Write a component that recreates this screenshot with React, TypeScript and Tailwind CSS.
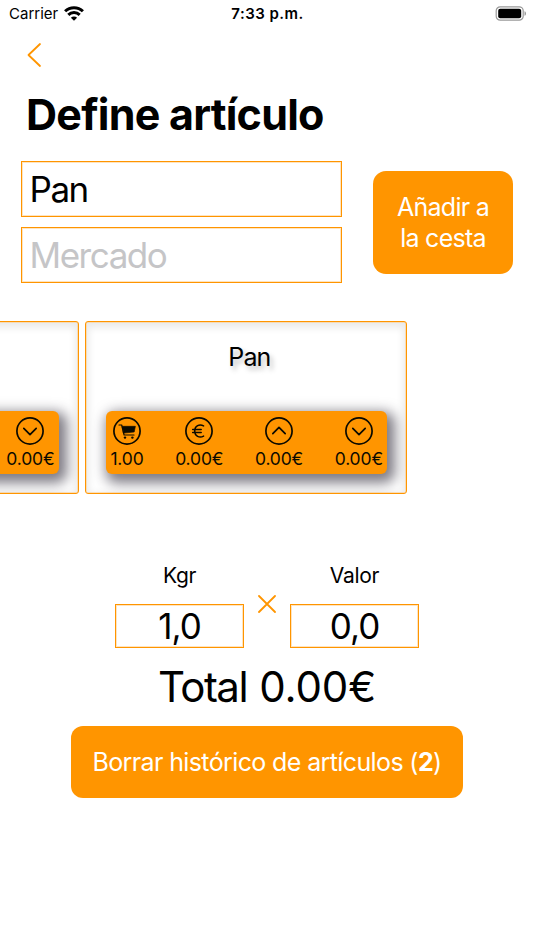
import React from "react";

type StatKind = "cart" | "euro" | "up" | "down";

function StatIcon({ kind }: { kind: StatKind }) {
  return (
    <svg className="block h-7 w-7" viewBox="0 0 28 28" fill="none" stroke="#0b0a00" strokeWidth="1.7" strokeLinecap="round" strokeLinejoin="round">
      <circle cx="14" cy="14" r="13.1" />
      {kind === "down" && <path d="M7.8 11.3 14 17.7l6.2-6.4" />}
      {kind === "up" && <path d="M7.8 16.7 14 10.3l6.2 6.4" />}
      {kind === "euro" && <path d="M18.6 8.9C14.5 6.700 9.700 8.600 9.700 14s4.800 7.300 8.900 5.100M7.700 12.500h8.500M7.700 15.400h8.500" strokeWidth="1.5" />}
      {kind === "cart" && (
        <g>
          <path d="M6 8h2.700l2.400 10h9.900" strokeWidth="1.200" />
          <path d="M9.400 9.300h13l-1.200 5.700-10.500 1.100z" fill="#0b0a00" strokeWidth="0.600" />
          <circle cx="12" cy="20.600" r="1.200" fill="#0b0a00" stroke="none" />
          <circle cx="19.400" cy="20.600" r="1.200" fill="#0b0a00" stroke="none" />
        </g>
      )}
    </svg>
  );
}

const stats: { kind: StatKind; value: string }[] = [
  { kind: "cart", value: "1.00" },
  { kind: "euro", value: "0.00€" },
  { kind: "up", value: "0.00€" },
  { kind: "down", value: "0.00€" },
];

function ArticleCard() {
  return (
    <div className="flex h-[173px] w-[322px] shrink-0 flex-col overflow-hidden rounded-[3px] border border-[#ff9500] px-[19.5px] shadow-[inset_0_0_0_0.5px_#ffca80,inset_0_3px_7px_3px_#ebebeb]">
      <div className="mt-[19px] h-8 pl-[6px] text-center text-[25px] leading-8 tracking-[-0.900px] [text-shadow:3px_4px_5px_rgba(0,0,0,0.25)]">Pan</div>
      <div className="mt-[38px] flex h-[63px] justify-between rounded-[6px] bg-[#ff9500] pl-[4.500px] pr-1 pt-[6px] shadow-[4px_5px_13px_4px_rgba(40,35,50,0.6)]">
        {stats.map((s) => (
          <div key={s.kind} className="flex flex-col items-center">
            <StatIcon kind={s.kind} />
            <span className="mt-[3px] text-[17.5px] leading-[22px] tracking-[-0.150px] text-[#0b0a00]">{s.value}</span>
          </div>
        ))}
      </div>
    </div>
  );
}

function Field({ label, value }: { label: string; value: string }) {
  return (
    <div className="flex w-[129px] flex-col">
      <span className="pt-px text-center text-[21px] leading-6 tracking-[-0.3px]">{label}</span>
      <div className="mt-4 h-[44px] border border-[#ff9500] text-center text-[35px] leading-[43px] tracking-[-1px] shadow-[inset_0_0_0_1px_#ffe4bf]">{value}</div>
    </div>
  );
}

export default function App() {
  return (
    <div className="h-[950px] w-[534px] overflow-hidden bg-white font-['Inter',sans-serif] text-black">
      <header className="grid h-7 grid-cols-3 items-center pl-[9px] pr-2">
        <div className="flex items-center gap-[6px]">
          <span className="text-[15px] leading-7">Carrier</span>
          <svg className="-mt-[2px] h-[15px] w-5" viewBox="0 0 20 15" fill="none" stroke="#000" strokeWidth="3">
            <path d="M1.100 5.300a12.700 12.700 0 0 1 17.800 0" />
            <path d="M4.300 8.900a8.200 8.200 0 0 1 11.400 0" />
            <path d="M10 14.700 6.900 11.700a4.400 4.400 0 0 1 6.200 0z" fill="#000" stroke="none" />
          </svg>
        </div>
        <span className="text-center text-[15px] font-semibold leading-7 tracking-[0.450px]">7:33 p.m.</span>
        <svg className="h-[15px] w-8 justify-self-end -mt-[2px]" viewBox="0 0 32 15">
          <rect x="2.200" y="0.800" width="27" height="13.400" rx="4" fill="none" stroke="#999" strokeWidth="1.200" />
          <rect x="4.200" y="2.800" width="23" height="9.400" rx="2" fill="#000" />
          <path d="M30.500 5.200c2 .6 2 4 0 4.600z" fill="#999" />
        </svg>
      </header>

      <nav className="h-[62px] pl-[27px] pt-[14px]">
        <svg className="h-[26px] w-4" viewBox="0 0 16 26" fill="none" stroke="#ff9500" strokeWidth="1.800" strokeLinecap="round" strokeLinejoin="round">
          <path d="M13 2 1.500 13 13 24" />
        </svg>
      </nav>

      <h1 className="h-12 whitespace-nowrap pl-[26px] text-[43px] font-bold leading-[48px] tracking-[-0.770px]">Define artículo</h1>

      <section className="mt-[23px] flex items-center gap-[31px] pl-[21px]">
        <div className="flex w-[321px] flex-col gap-[10px]">
          <div className="h-14 border border-[#ff9500] pl-[7.500px] text-[35px] leading-[55px] tracking-[-1.450px] shadow-[inset_0_0_0_1px_#ffe4bf]">Pan</div>
          <div className="h-14 border border-[#ff9500] pl-[7.500px] text-[35px] leading-[55px] tracking-[-1.450px] text-[#c5c5c7] shadow-[inset_0_0_0_1px_#ffe4bf]">Mercado</div>
        </div>
        <button className="h-[103px] w-[140px] rounded-[13px] bg-[#ff9500] pt-px text-[25px] leading-[31px] tracking-[-0.750px] text-white">
          Añadir a<br />la cesta
        </button>
      </section>

      <section className="-ml-[243px] mt-[38px] flex gap-[6.400px]">
        <ArticleCard />
        <ArticleCard />
      </section>

      <section className="mt-[69px] flex justify-center gap-[14px]">
        <Field label="Kgr" value="1,0" />
        <svg className="mt-[32px] h-[18px] w-[18px]" viewBox="0 0 18 18" stroke="#ff9500" strokeWidth="1.800" strokeLinecap="round">
          <path d="M1 1l16 16M17 1L1 17" />
        </svg>
        <Field label="Valor" value="0,0" />
      </section>

      <p className="mt-[15px] flex h-12 justify-center gap-[12px] text-[42px] leading-[48px]">
        <span className="tracking-[-1.500px]">Total</span>
        <span className="tracking-[-0.100px]">0.00€</span>
      </p>

      <button className="mx-auto mt-[15px] block h-[72px] w-[392px] whitespace-nowrap rounded-[12px] bg-[#ff9500] pt-px text-[25px] tracking-[-0.620px] text-white">
        Borrar histórico de artículos (<b className="font-bold">2</b>)
      </button>
    </div>
  );
}
